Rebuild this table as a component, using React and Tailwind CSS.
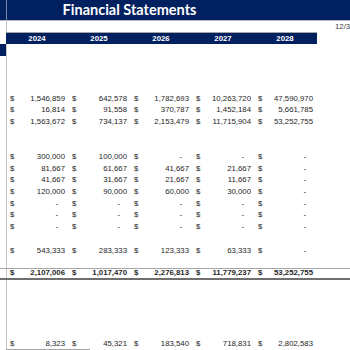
import React from "react";

const font = { fontFamily: '"Liberation Sans", Arial, sans-serif' };

const years = ["2024", "2025", "2026", "2027", "2028"];

// one entry per sheet row below the year bar; null = empty row
const rows = [
  ["1,546,859", "642,578", "1,782,693", "10,263,720", "47,590,970"],
  ["16,814", "91,558", "370,787", "1,452,184", "5,661,785"],
  ["1,563,672", "734,137", "2,153,479", "11,715,904", "53,252,755"],
  null,
  null,
  ["300,000", "100,000", "-", "-", "-"],
  ["81,667", "61,667", "41,667", "21,667", "-"],
  ["41,667", "31,667", "21,667", "11,667", "-"],
  ["120,000", "90,000", "60,000", "30,000", "-"],
  ["-", "-", "-", "-", "-"],
  ["-", "-", "-", "-", "-"],
  ["-", "-", "-", "-", "-"],
  null,
  ["543,333", "283,333", "123,333", "63,333", "-"],
  null,
  { total: true, cells: ["2,107,006", "1,017,470", "2,276,813", "11,779,237", "53,252,755"] },
  null,
  null,
  null,
  null,
  null,
];

function Money({ value, bold }) {
  const dash = value === "-";
  return (
    <div
      className={`flex w-[62px] shrink-0 items-center justify-between pl-[3px] ${
        dash ? "pr-[11px]" : "pr-[4px]"
      } ${bold ? "font-bold" : ""}`}
    >
      <span>$</span>
      <span>{value}</span>
    </div>
  );
}

function SheetRow({ row, last }) {
  const total = row && row.total;
  const cells = row ? (total ? row.cells : row) : null;
  return (
    <div
      className={`flex ${last ? "h-[10.65px]" : "h-[11.7px]"} ${
        total ? "border-t border-b-2 border-t-[#a6a6a6] border-b-[#6f6f6f]" : ""
      }`}
    >
      <div className="w-[6px] shrink-0" />
      <div className="flex flex-1 border-l border-[#c6c6c6] items-center">
        {cells && cells.map((v, i) => <Money key={i} value={v} bold={total} />)}
      </div>
    </div>
  );
}

export default function App() {
  return (
    <div
      className="w-[350px] h-[350px] overflow-hidden bg-white text-[7.8px] leading-none text-[#262626]"
      style={font}
    >
      {/* Title band */}
      <div className="flex h-[21px] bg-[#002060] border-b border-[#b4b8c4]">
        <div className="w-[6px] shrink-0" />
        <div className="flex w-[246px] items-center justify-center border-l border-[#7d88a6]">
          <span
            className="text-[14.5px] font-bold text-white"
            style={{ fontFamily: 'Lato, "Liberation Sans", sans-serif' }}
          >
            Financial Statements
          </span>
        </div>
      </div>

      {/* Date row */}
      <div className="flex h-[11px]">
        <div className="w-[6px] shrink-0" />
        <div className="flex flex-1 items-center border-l border-[#c6c6c6]">
          <div className="w-[328px] shrink-0" />
          <span className="whitespace-nowrap text-[#404040]">12/31/2028</span>
        </div>
      </div>

      {/* Year bar */}
      <div className="flex h-[12px]">
        <div className="w-[6px] shrink-0" />
        <div className="flex w-[311px] items-center bg-[#002060] border-t border-[#a6a6a6] font-bold text-white">
          {years.map((y) => (
            <div key={y} className="w-[62px] shrink-0 text-center">
              {y}
            </div>
          ))}
        </div>
      </div>

      {/* Section marker row */}
      <div className="flex h-[12px]">
        <div className="w-[6px] shrink-0 bg-[#002060]" />
        <div className="flex-1 border-l border-[#c6c6c6]" />
      </div>

      <div className="flex h-[36.65px]">
        <div className="w-[6px] shrink-0" />
        <div className="flex-1 border-l border-[#c6c6c6]" />
      </div>

      {rows.map((row, i) => (
        <SheetRow key={i} row={row} />
      ))}

      <SheetRow last row={["8,323", "45,321", "183,540", "718,831", "2,802,583"]} />
      <div className="flex h-[1px]">
        <div className="w-[6px] shrink-0" />
        <div className="w-[84px] bg-[#a6a6a6]" />
      </div>
    </div>
  );
}
